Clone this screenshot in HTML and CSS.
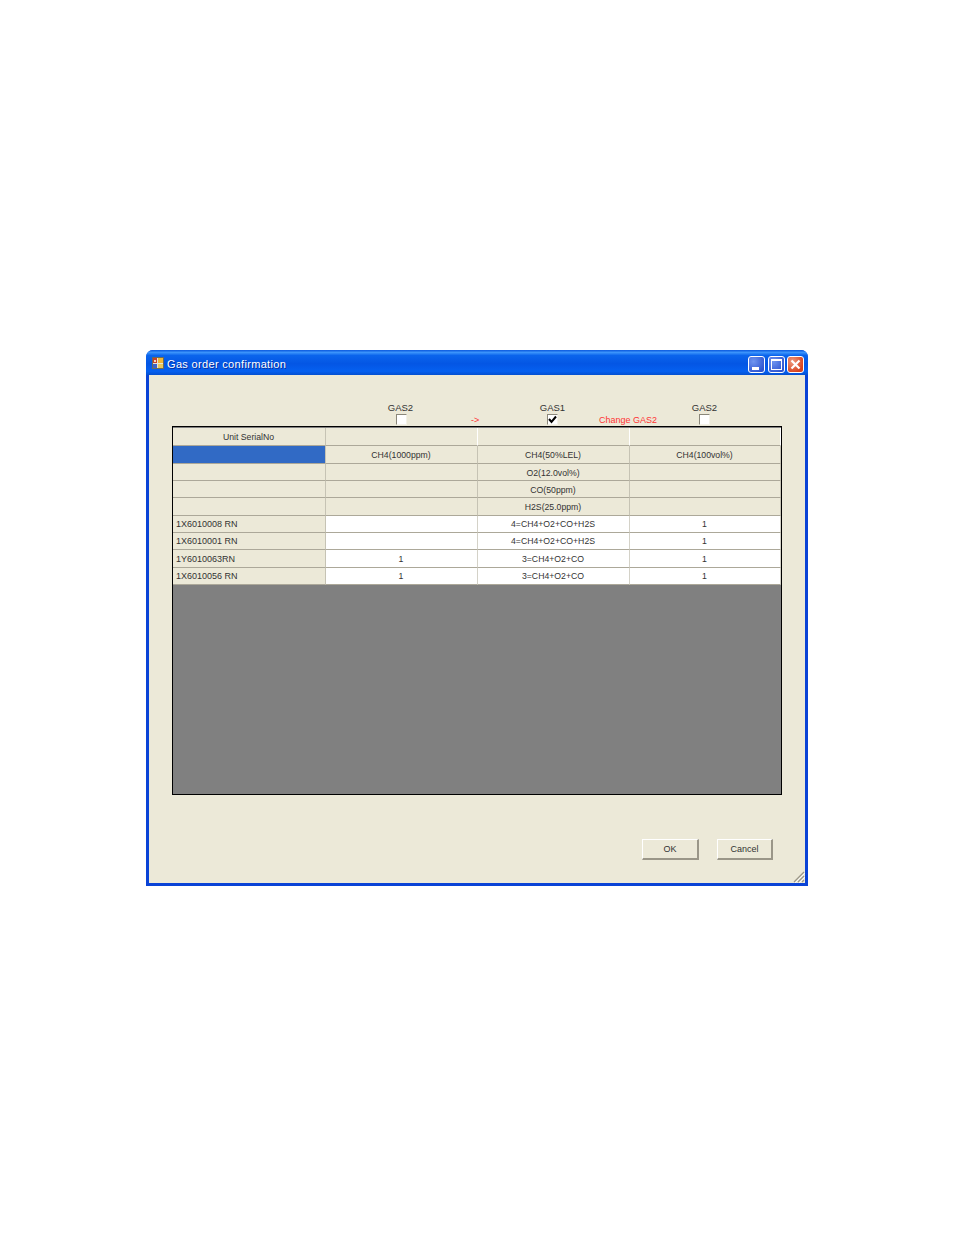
FILE: index.html
```html
<!DOCTYPE html>
<html>
    <head>
        <meta charset="utf-8">
        <title>Gas order confirmation</title>
        <link rel="stylesheet" href="styles.css">
    </head>
    <body>
        <div class="window">
            <div class="titlebar">
                <svg class="appicon" width="12" height="12" viewBox="0 0 12 12">
                    <rect x="0.5" y="0.5" width="11" height="11" fill="#e8e4d4" stroke="#6a6a5a"/>
                    <rect x="1" y="1" width="4" height="5" fill="#c8402a"/>
                    <rect x="2" y="3" width="2" height="2" fill="#f0d8c0"/>
                    <rect x="6" y="1" width="5" height="5" fill="#f2b632"/>
                    <rect x="1" y="7" width="4" height="4" fill="#3d62c8"/>
                    <rect x="6" y="7" width="5" height="4" fill="#e9c75a"/>
                </svg>
                <div class="title">Gas order confirmation</div>
                <div class="winbtn min">
                    <svg width="15" height="15" viewBox="0 0 15 15"><rect x="3" y="10" width="7" height="3" fill="#fff"/></svg>
                </div>
                <div class="winbtn">
                    <svg width="15" height="15" viewBox="0 0 15 15"><rect x="2.5" y="2.5" width="10" height="10" fill="none" stroke="#fff"/><rect x="2" y="2" width="11" height="2" fill="#fff"/></svg>
                </div>
                <div class="winbtn close">
                    <svg width="15" height="15" viewBox="0 0 15 15"><path d="M3.5 3.5 L11.5 11.5 M11.5 3.5 L3.5 11.5" stroke="#fff" stroke-width="2.2"/></svg>
                </div>
            </div>
            <div class="client">
                <div class="gasrow">
                    <div></div>
                    <div class="gas first"><span>GAS2</span><i class="check"></i></div>
                    <div class="gas"><span>GAS1</span><i class="check on"><svg width="9" height="9" viewBox="0 0 9 9"><path d="M1 4 L3.5 7 L8 1.5" fill="none" stroke="#000" stroke-width="2"/></svg></i></div>
                    <div class="gas"><span>GAS2</span><i class="check"></i></div>
                    <div class="red arrow">-&gt;</div>
                    <div class="red change">Change GAS2</div>
                </div>
                <div class="grid">
                    <div class="cell head">Unit SerialNo</div>
                    <div class="cell head"></div>
                    <div class="cell head"></div>
                    <div class="cell head"></div>

                    <div class="cell side selected"></div>
                    <div class="cell head">CH4(1000ppm)</div>
                    <div class="cell head">CH4(50%LEL)</div>
                    <div class="cell head">CH4(100vol%)</div>

                    <div class="cell side"></div>
                    <div class="cell head"></div>
                    <div class="cell head">O2(12.0vol%)</div>
                    <div class="cell head"></div>

                    <div class="cell side"></div>
                    <div class="cell head"></div>
                    <div class="cell head">CO(50ppm)</div>
                    <div class="cell head"></div>

                    <div class="cell side"></div>
                    <div class="cell head"></div>
                    <div class="cell head">H2S(25.0ppm)</div>
                    <div class="cell head"></div>

                    <div class="cell side">1X6010008 RN</div>
                    <div class="cell data"></div>
                    <div class="cell data">4=CH4+O2+CO+H2S</div>
                    <div class="cell data">1</div>

                    <div class="cell side">1X6010001 RN</div>
                    <div class="cell data"></div>
                    <div class="cell data">4=CH4+O2+CO+H2S</div>
                    <div class="cell data">1</div>

                    <div class="cell side">1Y6010063RN</div>
                    <div class="cell data">1</div>
                    <div class="cell data">3=CH4+O2+CO</div>
                    <div class="cell data">1</div>

                    <div class="cell side">1X6010056 RN</div>
                    <div class="cell data">1</div>
                    <div class="cell data">3=CH4+O2+CO</div>
                    <div class="cell data">1</div>
                </div>
                <div class="buttons">
                    <div class="button ok">OK</div>
                    <div class="button cancel">Cancel</div>
                </div>
                <svg class="grip" width="12" height="12" viewBox="0 0 12 12">
                    <path d="M11 1 L1 11 M11 5 L5 11 M11 9 L9 11" stroke="#9a9688" stroke-width="1.2"/>
                    <path d="M12 2 L2 12 M12 6 L6 12" stroke="#fff" stroke-width="0.8"/>
                </svg>
            </div>
        </div>
    </body>
</html>
```

FILE: styles.css
```css
* {
    box-sizing: border-box;
    margin: 0px;
    padding: 0px;
}
html, body {
    background: #fff;
}
body {
    font-family: "Liberation Sans", Arial, sans-serif;
    height: 1235px;
    overflow: hidden;
}
.window {
    width: 662px;
    height: 536px;
    margin: 350px 0 0 146px;
    padding: 0 3px 3px 3px;
    background: #0a43d6;
    border-radius: 7px 7px 0 0;
    display: flex;
    flex-direction: column;
}
.titlebar {
    height: 25px;
    margin: 0 -3px;
    padding: 3px 4px 0 6px;
    border-radius: 7px 7px 0 0;
    background: linear-gradient(180deg, #0a58de 0%, #3a93fb 10%, #0a64ec 22%, #0456e4 55%, #0560f0 85%, #0450d0 100%);
    display: flex;
    align-items: center;
    gap: 2px;
}
.appicon {
    margin-right: 1px;
    margin-top: -2px;
}
.title {
    flex: 1;
    color: #fff;
    font-size: 11px;
    letter-spacing: 0.33px;
    text-shadow: 1px 1px 0 #0a2f9c;
}
.winbtn {
    width: 17px;
    height: 17px;
    border: 1px solid #fff;
    border-radius: 3px;
    background: radial-gradient(circle at 30% 30%, #6f95f0, #2f55d0 80%);
    display: flex;
    align-items: center;
    justify-content: center;
    flex: none;
}
.winbtn svg {
    flex: none;
}
.min {
    margin-right: 1px;
}
.close {
    background: radial-gradient(circle at 30% 30%, #ee9a7e, #d8431f 75%);
}
.client {
    position: relative;
    flex: 1;
    background: #ece9d8;
    padding-left: 23px;
}
.gasrow {
    position: relative;
    height: 51px;
    width: 610px;
    padding-left: 1px;
    display: grid;
    grid-template-columns: 152px 152px 152px 152px;
}
.gas {
    padding-top: 27px;
    display: flex;
    flex-direction: column;
    align-items: center;
    font-size: 9.5px;
    line-height: 11px;
    color: #333;
}
.gas span {
    margin-left: -1px;
}
.check {
    display: block;
    width: 11px;
    height: 11px;
    margin-top: 1px;
    margin-right: 1px;
    background: #fff;
    border-top: 1px solid #8a877a;
    border-left: 1px solid #8a877a;
    border-right: 1px solid #f4f2e8;
    border-bottom: 1px solid #f4f2e8;
}
.first .check {
    margin-right: 0;
    margin-left: 1px;
}
.check svg {
    display: block;
}
.red {
    position: absolute;
    color: #f33;
    font-size: 9px;
    line-height: 11px;
    top: 40px;
}
.arrow {
    left: 299px;
}
.change {
    left: 427px;
}
.grid {
    width: 610px;
    height: 369px;
    background: #808080;
    border: 1px solid #000;
    padding-top: 1px;
    display: grid;
    grid-template-columns: 153px 152px 152px 151px;
    grid-template-rows: 18px 18px 17px 17px 18px 17px 17px 18px 17px;
    align-content: start;
}
.cell {
    font-size: 8.7px;
    color: #333;
    background: #ece9d8;
    border-right: 1px solid #c6c3b4;
    border-bottom: 1px solid #aca899;
    padding-right: 1px;
    display: flex;
    align-items: center;
    justify-content: center;
    overflow: hidden;
    white-space: nowrap;
}
.head {
    padding-top: 1px;
}
.head:nth-child(-n+4) {
    border-right-color: #fff;
}
.head:first-child {
    border-right-color: #c6c3b4;
}
.side {
    font-size: 9px;
    justify-content: flex-start;
    padding-left: 3px;
}
.selected {
    background: #316ac5;
}
.data {
    background: #fff;
    border-right-color: #d4d2c8;
}
.buttons {
    width: 601px;
    margin-top: 44px;
    display: flex;
    justify-content: flex-end;
    gap: 18px;
}
.button {
    height: 21px;
    font-size: 9px;
    color: #333;
    background: #ece9d8;
    border-top: 1px solid #fff;
    border-left: 1px solid #fff;
    border-right: 2px solid #9a9688;
    border-bottom: 2px solid #9a9688;
    display: flex;
    align-items: center;
    justify-content: center;
}
.ok {
    width: 57px;
}
.cancel {
    width: 56px;
}
.grip {
    position: absolute;
    right: 0;
    bottom: 0;
}
```
